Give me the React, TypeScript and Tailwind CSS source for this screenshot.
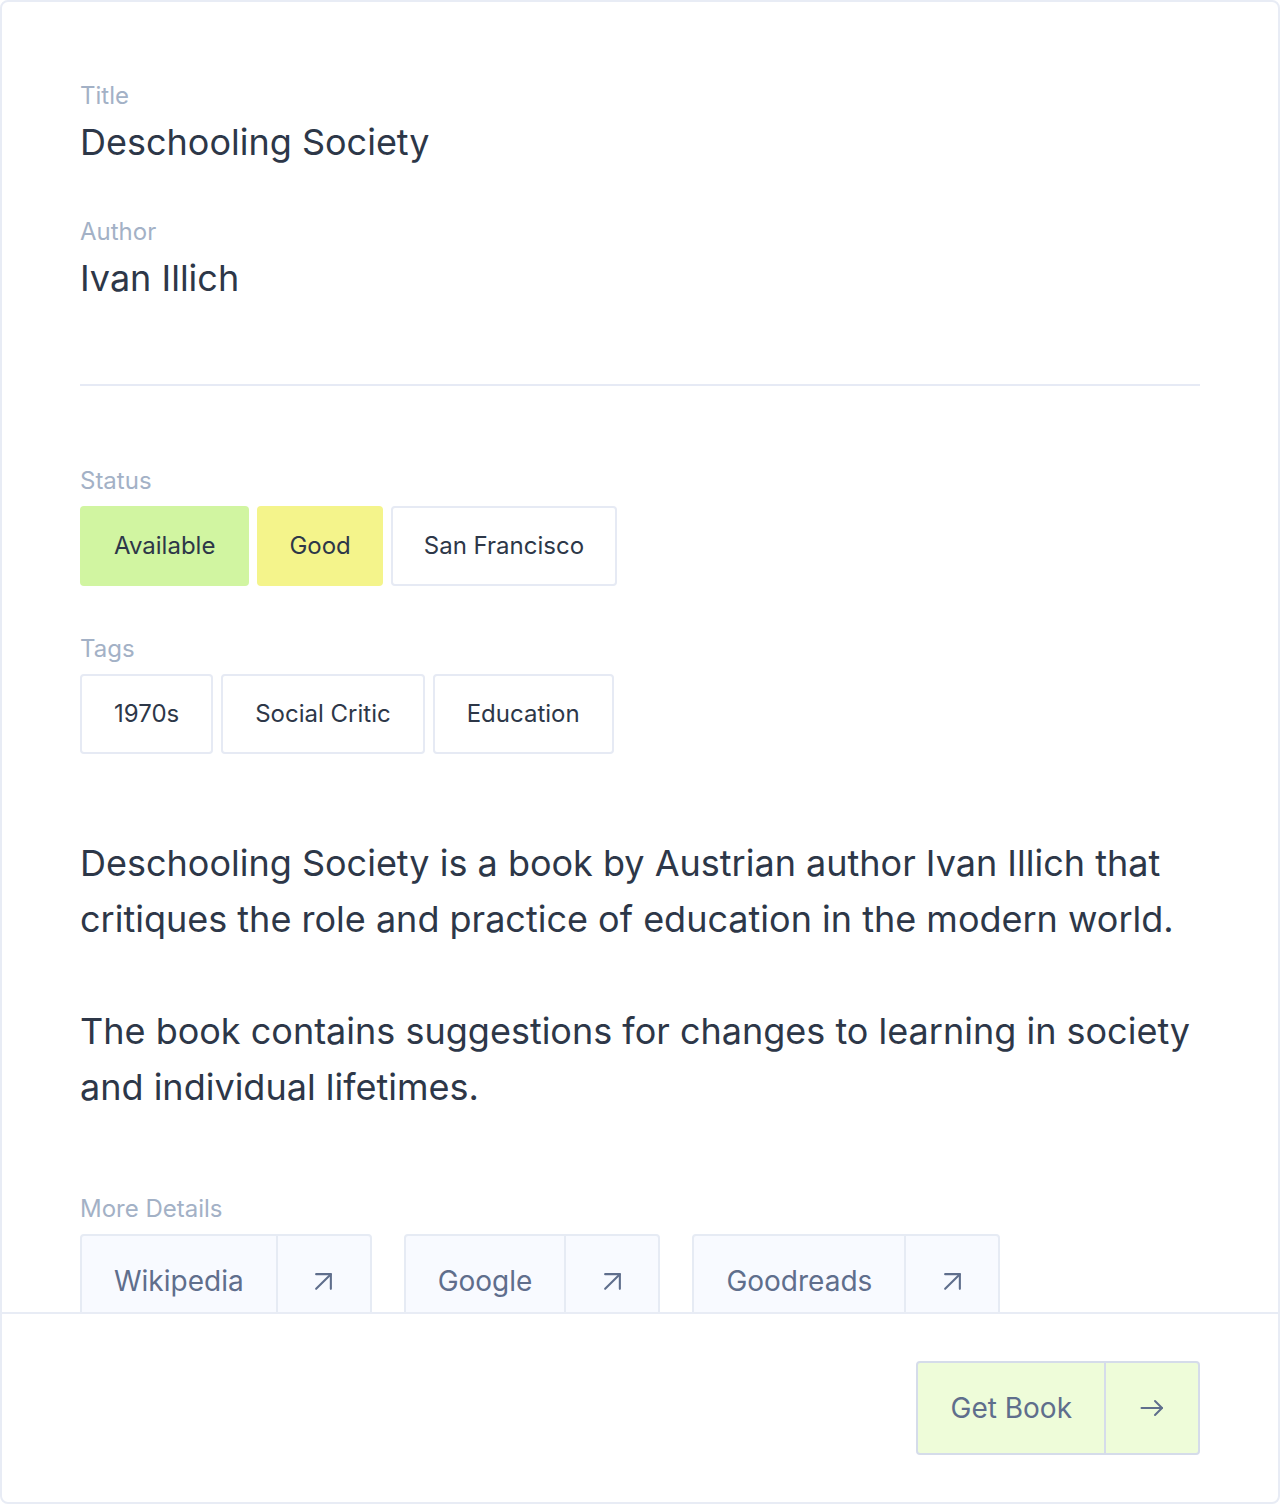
import React from 'react';

// Book detail card

const statusChips = [
  { label: 'Available', className: 'bg-[#d1f5a1] border-transparent' },
  { label: 'Good', className: 'bg-[#f4f48b] border-transparent px-[30px]' },
  { label: 'San Francisco', className: 'bg-white border-[#e6eaf4] px-[31px]' },
];

const tags = ['1970s', 'Social Critic', 'Education'];

const links = ['Wikipedia', 'Google', 'Goodreads'];

const ArrowUpRight = () => (
  <svg width="21" height="21" viewBox="0 0 20 20" fill="none" stroke="currentColor" strokeWidth="2" strokeLinecap="round" strokeLinejoin="round">
    <path d="M3 17 17 3" />
    <path d="M3 3h14v14" />
  </svg>
);

const ArrowRight = () => (
  <svg width="24" height="24" viewBox="0 0 24 24" fill="none" stroke="currentColor" strokeWidth="2" strokeLinecap="round" strokeLinejoin="round">
    <path d="M1.5 12h20.5" />
    <path d="m15 5 7 7-7 7" />
  </svg>
);

const Label: React.FC<{ children: React.ReactNode; className?: string }> = ({ children, className = '' }) => (
  <p className={`text-2xl leading-8 text-[#a3b1c6] ${className}`}>{children}</p>
);

const Chip: React.FC<{ label: string; className?: string }> = ({ label, className = 'bg-white border-[#e6eaf4]' }) => (
  <span className={`inline-flex items-center border-2 rounded-[4px] px-8 py-[22px] text-2xl leading-8 text-[#2d3748] ${className}`}>
    {label}
  </span>
);

export default function App() {
  return (
    <div className="h-[1504px] flex flex-col bg-white border-2 border-[#e8ecf5] rounded-lg overflow-hidden font-['Inter',sans-serif]">
      {/* Scrollable body */}
      <main className="flex-1 overflow-hidden px-[78px] pt-[78px]">
        <Label>Title</Label>
        <h1 className="mt-[10px] text-[36px] leading-10 text-[#2d3748]">Deschooling Society</h1>

        <Label className="mt-[54px]">Author</Label>
        <p className="mt-[10px] text-[36px] leading-10 text-[#2d3748]">Ivan Illich</p>

        <div className="mt-[86px] h-[2px] bg-[#e6eaf5]" />

        <Label className="mt-[79px]">Status</Label>
        <div className="mt-[9px] flex gap-2">
          {statusChips.map((chip) => (
            <Chip key={chip.label} label={chip.label} className={chip.className} />
          ))}
        </div>

        <Label className="mt-[47px]">Tags</Label>
        <div className="mt-[9px] flex gap-2">
          {tags.map((tag) => (
            <Chip key={tag} label={tag} />
          ))}
        </div>

        <div className="mt-[81px] text-[36px] leading-[56px] text-[#2d3748]">
          <p>
            Deschooling Society is a book by Austrian author Ivan Illich that critiques the role and practice of education in the modern world.
          </p>
          <p className="mt-14">
            The book contains suggestions for changes to learning in society and individual lifetimes.
          </p>
        </div>

        <Label className="mt-[78px]">More Details</Label>
        <div className="mt-[9px] flex gap-8">
          {links.map((link) => (
            <a key={link} href="#" className="flex border-2 border-[#e6ebf4] rounded-[4px] bg-[#f8faff] text-[#5f6e8c]">
              <span className="px-8 py-[27px] text-[28px] leading-9">{link}</span>
              <span className="w-[94px] border-l-2 border-[#e6ebf4] flex items-center justify-center">
                <ArrowUpRight />
              </span>
            </a>
          ))}
        </div>
      </main>

      {/* Footer */}
      <footer className="border-t-2 border-[#e8ecf5] px-[78px] py-[47px] flex justify-end">
        <button className="flex border-2 border-[#d5dcea] rounded-[4px] bg-[#eefcd9] text-[#5f6e8c]">
          <span className="px-8 py-[27px] text-[28px] leading-9">Get Book</span>
          <span className="w-[94px] border-l-2 border-[#d5dcea] flex items-center justify-center">
            <ArrowRight />
          </span>
        </button>
      </footer>
    </div>
  );
}
